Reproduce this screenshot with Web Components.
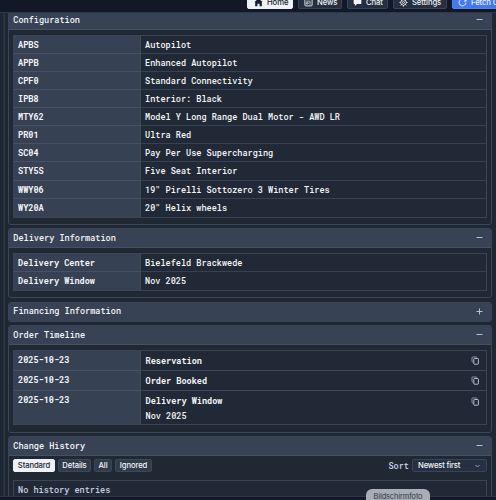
<!DOCTYPE html>
<html lang="en"><head><meta charset="utf-8"><title>Order</title>
<style>
html{background:#121827}
body{margin:0;height:500px;overflow:hidden;background:#121827;color:#f4f6fa;font:500 8.550px/12px "Roboto Mono","DejaVu Sans Mono",monospace}
</style></head><body>
<order-page></order-page>
<script>
const make=(name,html,init)=>customElements.define(name,class extends HTMLElement{
  constructor(){super();this.attachShadow({mode:'open'}).innerHTML=html;}
  connectedCallback(){if(init)init.call(this,this.shadowRoot);}
});
const icons={
 home:'<svg viewBox="0 0 10 10"><path fill="currentColor" d="M5 .5 9.5 4.5H8.7V9.3H6.2V6.3H3.8V9.3H1.3V4.5H.5Z"/></svg>',
 news:'<svg viewBox="0 0 10 10" fill="none" stroke="currentColor"><rect x="1" y="1.5" width="8" height="7.3" rx="1"/><path d="M2.6 3.5h4.8M2.6 5.2h2v1.5h-2zM5.8 5.2h1.8M5.8 6.8h1.8" stroke-width=".8"/></svg>',
 chat:'<svg viewBox="0 0 10 10"><path fill="currentColor" d="M2 1h6q1.3 0 1.3 1.3v3.2Q9.300 6.800 8 6.800H4.500L2.100 8.900V6.800Q.7 6.800.7 5.500V2.300Q.7 1 2 1Z"/></svg>',
 gear:'<svg viewBox="0 0 10 10" fill="none" stroke="currentColor"><circle cx="5" cy="5" r="3.1"/><circle cx="5" cy="5" r="1.100"/><path d="M5 .5v1.400M5 8.100v1.400M.5 5h1.400M8.100 5h1.400M1.800 1.800l1 1M7.200 7.200l1 1M1.800 8.200l1-1M7.200 2.800l1-1"/></svg>',
 fetch:'<svg viewBox="0 0 10 10" fill="none" stroke="currentColor"><path d="M8.800 5.200A3.800 3.800 0 1 1 7.600 2.200L9 3.400M9 1v2.500H6.500"/></svg>'};
make('nav-tab',`<style>:host{box-sizing:border-box;display:flex;align-items:center;gap:4px;flex:none;height:14px;padding:0 5px;border:1px solid #36445a;border-radius:2px;background:#252f3f;color:#f1f4f9;font:500 7.700px/9px Inter,sans-serif;letter-spacing:-.1px;white-space:nowrap}
:host([active]){background:#eef1f6;border-color:#eef1f6;color:#151c2b}:host([primary]){background:#4279ef;border-color:#4d82f5}
svg{width:9px;height:9px;display:block}</style><i></i><slot></slot>`,function(r){r.querySelector('i').innerHTML=icons[this.getAttribute('icon')];});
make('info-row',`<style>:host{display:grid;grid-template-columns:127px 1fr;box-sizing:border-box;height:18.15px;border-bottom:1px solid #364253}
:host(:last-child){border-bottom:0}
.k{background:#364153;border-right:1px solid #3f4b5d;border-bottom:1px solid #465264;margin-bottom:-1px;box-sizing:border-box;padding:3px 0 0 4px;font-weight:700}
.v{padding:3px 4px 0 4px;min-width:0;white-space:nowrap}</style><div class="k"></div><div class="v"><slot></slot></div>`,function(r){r.querySelector('.k').textContent=this.getAttribute('label');});
make('timeline-row',`<style>:host{display:grid;grid-template-columns:127px 1fr 15px;box-sizing:border-box;flex:none;height:20.300px;border-bottom:1px solid #3b4758}
:host(:last-child){height:33.400px;border-bottom:0}
.k{background:#364153;border-right:1px solid #3f4b5d;border-bottom:1px solid #465264;margin-bottom:-1px;box-sizing:border-box;padding:3px 0 0 4px;font-weight:700}
.v{padding:4px 0 0 4.500px;line-height:14.400px;margin-top:-1px}b{display:block}
svg{width:9px;height:9px;margin-top:5.500px;display:block}</style><div class="k"></div><div class="v"><b></b><slot></slot></div>
<svg viewBox="0 0 9 9" fill="none" stroke="#b4c1d9"><path d="M2.200 6H1.500Q1 6 1 5.300V1.500Q1 1 1.600 1h3.800Q6 1 6 1.700" stroke="#8794ab"/><rect x="2.800" y="2.500" width="4.600" height="5.700" rx=".7"/></svg>`,function(r){r.querySelector('.k').textContent=this.getAttribute('date');r.querySelector('b').textContent=this.getAttribute('event');});
make('info-table',`<style>:host{display:block;box-sizing:border-box;border:1px solid #394556;background:#222936;overflow:hidden}</style><slot></slot>`);
make('info-card',`<style>:host{display:block;box-sizing:border-box;border:1px solid #3a4657;border-radius:3px;background:#202834;overflow:hidden;flex:none}
header{box-sizing:border-box;height:18.500px;display:flex;align-items:center;justify-content:space-between;background:#374254;border-bottom:1px solid #445163;padding:0 8px 0 4.300px;color:#f1f4f9}
:host([closed]) header{border:0;height:18px}:host([closed]) span{margin-top:-1px}
svg{width:7px;height:7px;display:block;margin-top:-1px}.body{padding:5px 4px 0}</style><header><span></span><svg viewBox="0 0 7 7" stroke="#b8c2d0" fill="none"><path d="M.5 3.500h6"/></svg></header><div class="body"><slot></slot></div>`,function(r){r.querySelector('span').textContent=this.getAttribute('heading');if(this.hasAttribute('closed'))r.querySelector('path').setAttribute('d','M.5 3.500h6M3.500.5v6');});
make('filter-chip',`<style>:host{display:flex;align-items:center;justify-content:center;box-sizing:border-box;height:13px;border:1px solid #3c495b;border-radius:2px;background:#303b4c;font:500 7.700px/10px Inter,sans-serif;letter-spacing:-.12px}
:host([on]){background:#eef1f6;border-color:#eef1f6;color:#202838}</style><slot></slot>`);
make('filter-bar',`<style>:host{display:flex;gap:3px;align-items:center;height:13px;margin-top:-1.500px}
.sort{margin-left:auto;color:#c5d0e6}
.select{box-sizing:border-box;width:75px;height:13px;border:1px solid #35455e;border-radius:2px;background:#253042;display:flex;align-items:center;justify-content:space-between;padding:0 6px 0 5px;font:500 7.700px/10px Inter,sans-serif;letter-spacing:-.18px}
svg{width:5px;height:4px}</style><slot></slot><span class="sort">Sort</span><div class="select"><span>Newest first</span><svg viewBox="0 0 5 4" fill="none" stroke="#96a3b7"><path d="m.5 1 2 2 2-2"/></svg></div>`);
make('order-page',`<style>:host{display:block;position:relative;height:500px}
nav{box-sizing:border-box;height:12px;display:flex;gap:5px;padding-left:247px;align-items:flex-end;padding-bottom:3px;overflow:hidden}
main{box-sizing:border-box;height:485px;overflow:hidden;background:#1f2733;border-top:1px solid #2d3949;border-bottom:1px solid #2b3748;display:flex}
.rail{flex:none;width:5px;box-sizing:border-box;border-left:3px solid #1d2633;border-right:1px solid #2d3948;background:#263140}
.stack{margin-left:3px;width:484px;flex:none;display:flex;flex-direction:column;gap:3.500px}
info-card:first-child{margin-top:-3px}
.empty{height:40px;padding:3px 4px;color:#c3cee5}
.tip{position:absolute;left:366px;top:489px;width:64px;height:18px;border-radius:6px;background:#a9adb7;color:#303743;font:7.400px/15px Inter,sans-serif;letter-spacing:-.1px;text-align:center}
.clip{position:absolute;inset:0;overflow:hidden;pointer-events:none}</style>
<nav><nav-tab icon="home" active style="width:46px;padding-left:6px">Home</nav-tab><nav-tab icon="news" style="width:44px">News</nav-tab><nav-tab icon="chat" style="width:41px">Chat</nav-tab><nav-tab icon="gear" style="width:54px">Settings</nav-tab><nav-tab icon="fetch" primary style="width:90px">Fetch Orders</nav-tab></nav>
<main><div class="rail"></div><div class="stack">
<info-card heading="Configuration" style="height:214.500px"><info-table><info-row label="APBS">Autopilot</info-row><info-row label="APPB">Enhanced Autopilot</info-row><info-row label="CPF0">Standard Connectivity</info-row><info-row label="IPB8">Interior: Black</info-row><info-row label="MTY62">Model Y Long Range Dual Motor - AWD LR</info-row><info-row label="PR01">Ultra Red</info-row><info-row label="SC04">Pay Per Use Supercharging</info-row><info-row label="STY5S">Five Seat Interior</info-row><info-row label="WWY06">19" Pirelli Sottozero 3 Winter Tires</info-row><info-row label="WY20A">20" Helix wheels</info-row></info-table></info-card>
<info-card heading="Delivery Information" style="height:70px"><info-table><info-row label="Delivery Center">Bielefeld Brackwede</info-row><info-row label="Delivery Window">Nov 2025</info-row></info-table></info-card>
<info-card heading="Financing Information" closed style="height:20px"></info-card>
<info-card heading="Order Timeline" style="height:107.500px"><info-table><timeline-row date="2025-10-23" event="Reservation"></timeline-row><timeline-row date="2025-10-23" event="Order Booked"></timeline-row><timeline-row date="2025-10-23" event="Delivery Window">Nov 2025</timeline-row></info-table></info-card>
<info-card heading="Change History" style="height:90px"><filter-bar><filter-chip on style="width:42px">Standard</filter-chip><filter-chip style="width:33px">Details</filter-chip><filter-chip style="width:18px">All</filter-chip><filter-chip style="width:37px">Ignored</filter-chip></filter-bar><info-table style="margin-top:8px"><div class="empty">No history entries</div></info-table></info-card>
</div></main><div class="clip"><div class="tip">Bildschirmfoto</div></div>`);
</script></body></html>
